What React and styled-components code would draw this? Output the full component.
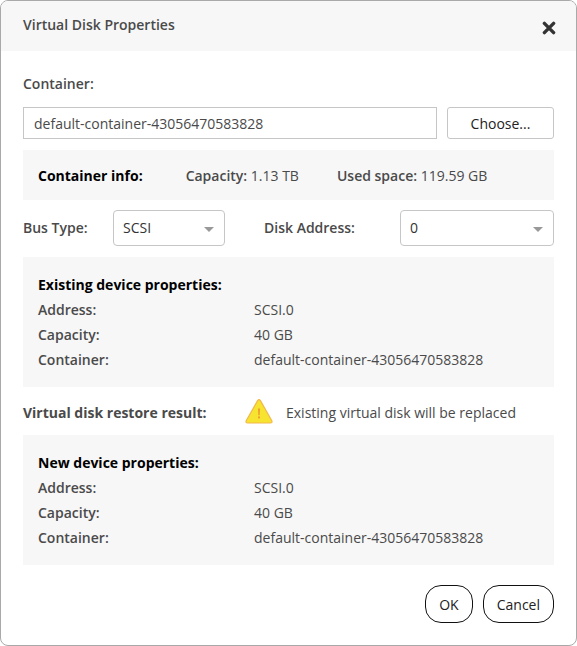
import React, { useState } from 'react'
import styled, { createGlobalStyle } from 'styled-components';


const GlobalStyle = createGlobalStyle`
  * {
    box-sizing: border-box;
  }
  body {
    margin: 0;
    background: #fff;
    color: #4a4a4a;
    font-family: 'Open Sans', 'Noto Sans', sans-serif;
    font-size: 14px;
    line-height: 25px;
  }
  h1, h2, p, dl, dd {
    margin: 0;
    font-size: 14px;
  }
  button, input, select {
    font-family: inherit;
    font-size: 14px;
  }
`;

const container = 'default-container-43056470583828';

const existingDevice = [
  { name: 'Address:', value: 'SCSI.0' },
  { name: 'Capacity:', value: '40 GB' },
  { name: 'Container:', value: container },
];

const newDevice = [
  { name: 'Address:', value: 'SCSI.0' },
  { name: 'Capacity:', value: '40 GB' },
  { name: 'Container:', value: container },
];

const CloseIcon = () => (
  <svg width="14" height="14" viewBox="0 0 14 14" aria-hidden="true">
    <path d="M2.4 2.4L11.6 11.6M11.6 2.4L2.4 11.6" stroke="#333" strokeWidth="3.4" strokeLinecap="round" />
  </svg>
)

const WarningIcon = () => (
  <svg width="28" height="25" viewBox="0 0 28 25" role="img" aria-label="Warning">
    <path
      d="M12.6 1.6Q14 -0.4 15.4 1.6L26.8 21.8Q27.6 24 25.4 24H2.6Q0.4 24 1.2 21.8Z"
      fill="#f7e431"
      stroke="#f2b84b"
      strokeWidth="1.2"
      strokeLinejoin="round"
    />
    <path d="M12.9 9.5H15.1L14.7 16.2H13.3Z" fill="#f0a030" />
    <rect x="13" y="17.4" width="2" height="2" fill="#f0a030" />
  </svg>
)

const DeviceProperties = ({ title, items }) => (
  <DevicePanel>
    <PanelTitle>{title}</PanelTitle>
    <PropertyList>
      {items.map((item) => (
        <React.Fragment key={item.name}>
          <dt>{item.name}</dt>
          <dd>{item.value}</dd>
        </React.Fragment>
      ))}
    </PropertyList>
  </DevicePanel>
)

const App = () => {
  const [name, setName] = useState(container);

  return (
    <>
      <GlobalStyle />
      <Dialog role="dialog" aria-labelledby="dialog-title">
        <Header>
          <Title id="dialog-title">Virtual Disk Properties</Title>
          <CloseButton type="button" aria-label="Close">
            <CloseIcon />
          </CloseButton>
        </Header>
        <Body>
          <Label htmlFor="container">Container:</Label>
          <ContainerRow>
            <TextInput id="container" value={name} onChange={(e) => setName(e.target.value)} />
            <ChooseButton type="button">Choose...</ChooseButton>
          </ContainerRow>

          <InfoPanel>
            <PanelTitle>Container info:</PanelTitle>
            <p><Strong>Capacity:</Strong> 1.13 TB</p>
            <p><Strong>Used space:</Strong> 119.59 GB</p>
          </InfoPanel>

          <SelectRow>
            <SelectField $labelWidth="90px">
              <Label htmlFor="bus-type">Bus Type:</Label>
              <SelectBox>
                <Select id="bus-type" defaultValue="SCSI">
                  <option>SCSI</option>
                  <option>IDE</option>
                </Select>
              </SelectBox>
            </SelectField>
            <SelectField $labelWidth="136px">
              <Label htmlFor="disk-address">Disk Address:</Label>
              <SelectBox>
                <Select id="disk-address" defaultValue="0">
                  <option>0</option>
                  <option>1</option>
                </Select>
              </SelectBox>
            </SelectField>
          </SelectRow>

          <DeviceProperties title="Existing device properties:" items={existingDevice} />

          <ResultRow>
            <ResultLabel>Virtual disk restore result:</ResultLabel>
            <WarningIcon />
            <ResultText>Existing virtual disk will be replaced</ResultText>
          </ResultRow>

          <DeviceProperties title="New device properties:" items={newDevice} />

          <Footer>
            <RoundButton type="button">OK</RoundButton>
            <RoundButton type="button">Cancel</RoundButton>
          </Footer>
        </Body>
      </Dialog>
    </>
  )
}


const Dialog = styled.div`
  overflow: hidden;
  border: 1px solid #a9a9a9;
  border-radius: 8px;
  background: #fff;
`;

const Header = styled.header`
  display: flex;
  justify-content: space-between;
  height: 50px;
  padding: 11px 20px 0 22px;
  background: #f7f7f7;
`;

const Title = styled.h1`
  font-weight: 600;
`;

const CloseButton = styled.button`
  display: flex;
  align-items: flex-end;
  height: 23px;
  padding: 0;
  border: 0;
  background: none;
  cursor: pointer;
`;

const Body = styled.div`
  padding: 20px 22px 22px;
`;

const Label = styled.label`
  font-weight: 600;
`;

const Strong = styled.span`
  font-weight: 600;
`;

const ContainerRow = styled.div`
  display: flex;
  gap: 10px;
  margin: 11px 0;
`;

const TextInput = styled.input`
  flex: 1;
  min-width: 0;
  height: 32px;
  padding: 0 10px;
  border: 1px solid #c6c6c6;
  color: #4a4a4a;
`;

const ChooseButton = styled.button`
  width: 107px;
  height: 32px;
  border: 1px solid #c6c6c6;
  border-radius: 3px;
  background: #fff;
  color: #222;
  cursor: pointer;
`;

const InfoPanel = styled.section`
  display: flex;
  align-items: center;
  height: 50px;
  padding: 0 15px;
  background: #f7f7f7;

  p {
    margin-right: 38px;
  }
  h2 {
    margin-right: 43px;
  }
`;

const PanelTitle = styled.h2`
  color: #000;
  font-weight: 700;
`;

const SelectRow = styled.div`
  display: grid;
  grid-template-columns: 202px 1fr;
  gap: 39px;
  margin: 10px 0 11px;
`;

const SelectField = styled.div`
  display: grid;
  grid-template-columns: ${(props) => props.$labelWidth} 1fr;
  align-items: center;

  label {
    padding-bottom: 2px;
  }
`;

const SelectBox = styled.div`
  position: relative;

  &::after {
    content: '';
    position: absolute;
    top: 17px;
    right: 11px;
    border: 5px solid transparent;
    border-top-color: #999;
    border-bottom: 0;
    pointer-events: none;
  }
`;

const Select = styled.select`
  display: block;
  width: 100%;
  height: 36px;
  padding: 0 9px 2px;
  border: 1px solid #c6c6c6;
  border-radius: 4px;
  background: #fff;
  color: #333;
  appearance: none;
`;

const DevicePanel = styled.section`
  padding: 15px;
  background: #f7f7f7;
`;

const PropertyList = styled.dl`
  display: grid;
  grid-template-columns: 216px 1fr;

  dt {
    font-weight: 600;
  }
`;

const ResultRow = styled.div`
  display: flex;
  align-items: center;
  height: 48px;
`;

const ResultLabel = styled.span`
  width: 222px;
  padding-top: 3px;
  font-weight: 700;
`;

const ResultText = styled.p`
  padding: 3px 0 0 13px;
`;

const Footer = styled.footer`
  display: flex;
  justify-content: flex-end;
  gap: 10px;
  margin-top: 20px;
`;

const RoundButton = styled.button`
  height: 38px;
  padding: 0 13px;
  border: 1px solid #111;
  border-radius: 16px;
  background: #fff;
  color: #222;
  cursor: pointer;
`;


export default App;
